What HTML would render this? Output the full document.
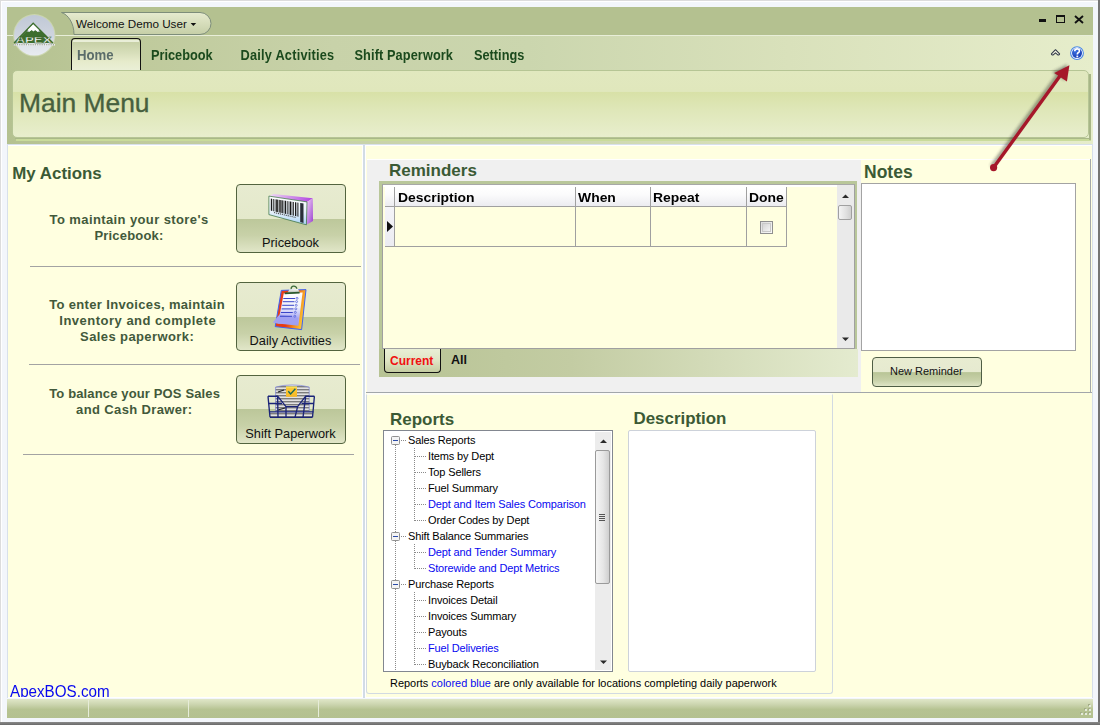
<!DOCTYPE html>
<html><head><meta charset="utf-8">
<style>
*{margin:0;padding:0;box-sizing:border-box;}
html,body{width:1100px;height:725px;overflow:hidden;background:#f3f6fb;font-family:"Liberation Sans",sans-serif;}
.a{position:absolute;}
.t{position:absolute;white-space:nowrap;line-height:1;}
.ttl{font-weight:bold;color:#3b5a35;}
.tab{font-weight:bold;font-size:12.75px;color:#1b4a1d;transform:scaleY(1.1);transform-origin:0 11.5px;}
.home{font-size:13.2px;}
.btn{position:absolute;left:236px;width:110px;height:69px;border:1px solid #53643f;border-radius:4px;background:linear-gradient(#e7ebd0 0,#e4e9cb 50%,#bcc79a 50%,#c8d1a8 75%,#e1e6c8 100%);overflow:hidden;}
.btn .lbl{position:absolute;left:-1px;right:0;text-align:center;font-size:12.8px;color:#111;line-height:1;}
.sep{position:absolute;height:1px;background:#a3a3a3;}
.act{position:absolute;font-weight:bold;font-size:13px;color:#42593b;line-height:16px;letter-spacing:0.35px;white-space:nowrap;}
.tree div{position:absolute;white-space:nowrap;font-size:11px;letter-spacing:-0.14px;line-height:16px;color:#000;}
.tree .b{color:#0808f0;}
</style></head><body>
<!-- window border -->
<div class="a" style="left:0;top:0;width:1100px;height:1px;background:#dcdcdc"></div>
<div class="a" style="left:0;top:0;width:1px;height:725px;background:#dcdcdc"></div>
<div class="a" style="left:1px;top:1px;width:1097px;height:1px;background:#fff"></div>
<div class="a" style="left:1px;top:1px;width:1px;height:721px;background:#fff"></div>
<div class="a" style="left:1098px;top:0;width:2px;height:725px;background:#747474"></div>
<div class="a" style="left:0;top:722px;width:1100px;height:3px;background:linear-gradient(#8a8a8a,#6a6a6a)"></div>

<!-- top green frame -->
<div class="a" style="left:7px;top:7px;width:1086px;height:28px;background:#b4c190"></div>
<div class="a" style="left:7px;top:35px;width:1086px;height:1px;background:#e8eed8"></div>
<div class="a" style="left:7px;top:36px;width:1086px;height:108px;background:linear-gradient(to right,#b4c190 0,#bfca9c 12%,#c8d2a9 30%,#cbd6ae 48%,#d9e1bb 72%,#e6edcb 100%)"></div>
<!-- logo -->
<svg class="a" style="left:12px;top:13px" width="45" height="45" viewBox="0 0 45 45">
 <defs>
  <linearGradient id="lg" x1="0" y1="0" x2="0" y2="1"><stop offset="0" stop-color="#c0c8d6"/><stop offset="0.5" stop-color="#ced4de"/><stop offset="0.72" stop-color="#dde2e9"/><stop offset="1" stop-color="#e8ebf0"/></linearGradient>
 </defs>
 <circle cx="22.3" cy="22.3" r="21.2" fill="#cbd6ae"/>
 <circle cx="22.3" cy="22.3" r="20.2" fill="url(#lg)"/>
 
 <path d="M6.5 26.2 L10.6 22.3 L14.6 18.2 L17.2 18.9 L19.9 16.5 L21.2 18.2 L23.2 16.9 L25.8 18.9 L29.1 18.2 L33.8 22.2 L37.7 26.2 L39 30 L4.5 30 Z" fill="#3d6e2e"/>
 <path d="M2.2 30.2 L21.2 10.5 L40.8 30.2" fill="none" stroke="#3d6e2e" stroke-width="1.7"/>
 <path d="M21.2 11.2 L15.8 16.8 L17.4 18.6 L19.9 16.9 L21.2 18.4 L23.2 17.1 L25.8 18.8 L27 16.9 Z" fill="#fff"/>
 <text x="21.5" y="30.3" text-anchor="middle" font-family="Liberation Sans" font-weight="bold" font-size="8.6" fill="#fff" stroke="#2f5a24" stroke-width="0.35" textLength="36" lengthAdjust="spacingAndGlyphs">APEX</text>
 <path d="M1.5 31.8 L43 31.8" stroke="#f4f4f4" stroke-width="1.6"/>
 <path d="M1.5 31.8 L43 31.8" stroke="#33402c" stroke-width="1.1" stroke-dasharray="0.9 0.9" opacity="0.6"/>
</svg>
<!-- welcome pill -->
<svg class="a" style="left:60px;top:11px" width="152" height="25" viewBox="0 0 152 25">
 <defs><linearGradient id="pg" x1="0" y1="0" x2="0" y2="1"><stop offset="0" stop-color="#e6ebcf"/><stop offset="1" stop-color="#c6cfa7"/></linearGradient></defs>
 <path d="M1.5 1.5 L140 1.5 A11 11 0 0 1 140 23.5 L14 23.5 C14 12 8 3.5 1.5 1.5 Z" fill="url(#pg)" stroke="#7d8d7a" stroke-width="1"/>
</svg>
<div class="t" style="left:76px;top:18px;font-size:11.7px;color:#111">Welcome Demo User</div>
<svg class="a" style="left:190px;top:22px" width="7" height="5"><path d="M0.6 1 L6.2 1 L3.4 4 Z" fill="#111"/></svg>

<!-- home tab -->
<div class="a" style="left:71px;top:38px;width:70px;height:33px;border:1px solid #111;border-width:1.6px 1.5px 0 1.5px;border-radius:4px 4px 0 0;background:linear-gradient(#c9d2aa 0,#c8d1a8 12%,#d8dfbb 45%,#e6ebcb 70%,#ebf0d8 100%)"></div>
<div class="a" style="left:73px;top:40px;width:66px;height:2px;background:#e9eed8"></div>
<div class="t tab home" style="left:77px;top:48.5px;color:#5b6d6a">Home</div>
<div class="t tab" style="left:151px;top:49.6px">Pricebook</div>
<div class="t tab" style="left:240.5px;top:49.6px;letter-spacing:0.23px">Daily Activities</div>
<div class="t tab" style="left:354.5px;top:49.6px;letter-spacing:0.1px">Shift Paperwork</div>
<div class="t tab" style="left:474px;top:49.6px">Settings</div>

<!-- window controls -->
<div class="a" style="left:1039px;top:19px;width:7px;height:3px;background:#111"></div>
<div class="a" style="left:1056px;top:15px;width:9px;height:8px;border:1px solid #111;border-top-width:2px"></div>
<svg class="a" style="left:1074px;top:15px" width="10" height="9"><path d="M1 1 L9 8 M9 1 L1 8" stroke="#111" stroke-width="1.9"/></svg>
<svg class="a" style="left:1050px;top:48px" width="12" height="9"><path d="M5.5 1.7 L9.6 5.9 Q9.4 7.2 7.8 6.9 L5.5 4.9 L3.2 6.9 Q1.6 7.2 1.4 5.9 Z" fill="#f8f8e4" stroke="#303848" stroke-width="1.05" stroke-linejoin="round"/></svg>
<svg class="a" style="left:1069px;top:45px" width="16" height="16" viewBox="0 0 16 16">
 <defs><radialGradient id="hg" cx="0.35" cy="0.3" r="0.8"><stop offset="0" stop-color="#3c72e0"/><stop offset="1" stop-color="#1236b0"/></radialGradient></defs>
 <circle cx="8" cy="8.1" r="6.4" fill="#fff" stroke="#4a88e4" stroke-width="1.1"/>
 <circle cx="8" cy="8.1" r="5" fill="url(#hg)"/>
 <path d="M5.7 6.3 Q5.8 3.9 8.1 3.9 Q10.4 3.9 10.4 5.9 Q10.4 7.1 9.1 7.8 Q8.3 8.3 8.3 9.6" fill="none" stroke="#fff" stroke-width="1.6"/>
 <rect x="7.4" y="10.6" width="1.8" height="1.7" fill="#fff"/>
</svg>

<!-- main menu panel -->
<div class="a" style="left:15px;top:138px;width:1076px;height:1px;background:#a9b888"></div>
<div class="a" style="left:16px;top:139px;width:1075px;height:2px;background:#c9db9b"></div>
<div class="a" style="left:1089px;top:74px;width:2px;height:66px;background:#a7b587"></div>
<div class="a" style="left:12px;top:70px;width:1077px;height:68px;border:1px solid #b6c595;border-radius:5px;background:linear-gradient(#e1e8bf 0,#e0e7bc 31%,#d8e1a7 32%,#dfe7b9 60%,#e8eecd 100%)"></div>
<div class="t" style="left:19px;top:89.8px;font-size:26.4px;color:#47603e;-webkit-text-stroke:0.35px #47603e">Main Menu</div>

<!-- content area -->
<div class="a" style="left:7px;top:144px;width:1086px;height:1px;background:#d8e0ea"></div>
<div class="a" style="left:7px;top:145px;width:1086px;height:553px;background:#fff"></div>
<div class="a" style="left:8px;top:146px;width:354px;height:551px;background:#ffffe0"></div>
<div class="a" style="left:7px;top:145px;width:1px;height:553px;background:#d8e0ea"></div>
<div class="a" style="left:363px;top:145px;width:2px;height:553px;background:#d2dce6"></div>
<div class="a" style="left:366px;top:146px;width:726px;height:551px;background:#ffffe0"></div>
<div class="a" style="left:1092px;top:145px;width:1px;height:553px;background:#d8e0ea"></div>

<!-- My Actions -->
<div class="t ttl" style="left:12.3px;top:165.6px;font-size:16.9px">My Actions</div>
<div class="act" style="left:49.6px;top:212px;letter-spacing:0.393px">To maintain your store's</div><div class="act" style="left:94.4px;top:228px;letter-spacing:0.2px">Pricebook:</div><div class="act" style="left:49.2px;top:297px;letter-spacing:0.343px">To enter Invoices, maintain</div><div class="act" style="left:59.3px;top:313px;letter-spacing:0.496px">Inventory and complete</div><div class="act" style="left:80.1px;top:329px;letter-spacing:0.398px">Sales paperwork:</div><div class="act" style="left:49.2px;top:386px;letter-spacing:0.14px">To balance your POS Sales</div><div class="act" style="left:76.1px;top:402px;letter-spacing:0.366px">and Cash Drawer:</div>
<div class="sep" style="left:30px;top:266px;width:331px"></div>

<div class="sep" style="left:29px;top:364px;width:331px"></div>

<div class="sep" style="left:23px;top:454px;width:331px"></div>

<div class="btn" style="top:184px"><div class="lbl" style="top:52px">Pricebook</div></div>
<div class="btn" style="top:282px"><div class="lbl" style="top:52px">Daily Activities</div></div>
<div class="btn" style="top:375px"><div class="lbl" style="top:52px">Shift Paperwork</div></div>

<svg class="a" style="left:265px;top:190px" width="52" height="40" viewBox="0 0 52 40">
<defs>
<linearGradient id="bf" x1="0" y1="0" x2="0" y2="1"><stop offset="0" stop-color="#ffffff"/><stop offset="0.55" stop-color="#e8f2fb"/><stop offset="1" stop-color="#a9d3f7"/></linearGradient>
<linearGradient id="br" x1="0" y1="0" x2="1" y2="1"><stop offset="0" stop-color="#f4d8f8"/><stop offset="1" stop-color="#9a3ed0"/></linearGradient>
<linearGradient id="bt" x1="0" y1="0" x2="1" y2="0"><stop offset="0" stop-color="#f0dcf6"/><stop offset="1" stop-color="#b044e0"/></linearGradient>
<clipPath id="bc"><path d="M5.2 8.5 L40.5 13.8 L40.5 33.5 L34.8 32 L34.8 27 L5.2 20.6 Z"/></clipPath>
</defs>
<path d="M3.9 6.1 L8.3 4.1 L47.8 8.3 L42 11.9 Z" fill="url(#bt)"/>
<path d="M42 11.9 L47.8 8.3 L48 31 L41.4 34.8 Z" fill="url(#br)"/>
<path d="M3.9 6.1 L42 11.9 L41.4 34.8 L3.9 24.6 Z" fill="url(#bf)" stroke="#2f6a3a" stroke-width="0.7"/>
<g clip-path="url(#bc)" fill="#1a1a1a">
<rect x="5.8" y="0" width="1.4" height="40"/><rect x="8.3" y="0" width="1" height="40"/>
<rect x="10.5" y="0" width="2.6" height="40" fill="#3a3a3a"/><rect x="13.6" y="0" width="3.2" height="40" fill="#555"/>
<rect x="17.2" y="0" width="1.2" height="40"/><rect x="19.6" y="0" width="1.6" height="40"/>
<rect x="22.4" y="0" width="1" height="40"/><rect x="24.6" y="0" width="1.8" height="40"/>
<rect x="27.6" y="0" width="1.2" height="40"/><rect x="30" y="0" width="1.3" height="40"/>
<rect x="32.4" y="0" width="1" height="40"/><rect x="35.2" y="0" width="3.3" height="40" fill="#2a2f38"/>
</g>
<path d="M9 22.5 L31 27.5" stroke="#333" stroke-width="1.1" stroke-dasharray="1.2 0.8" opacity="0.8"/>
</svg>
<svg class="a" style="left:270px;top:282px" width="42" height="52" viewBox="0 0 42 52">
<defs>
<linearGradient id="cb" x1="0" y1="0" x2="1" y2="0.3"><stop offset="0" stop-color="#e8401c"/><stop offset="0.55" stop-color="#e83a10"/><stop offset="0.8" stop-color="#f68a1c"/><stop offset="1" stop-color="#fbc030"/></linearGradient>
<linearGradient id="cp" x1="0" y1="0" x2="0" y2="1"><stop offset="0" stop-color="#ffffff"/><stop offset="0.45" stop-color="#eef0fb"/><stop offset="0.7" stop-color="#b8b8f6"/><stop offset="1" stop-color="#9a9af0"/></linearGradient>
<linearGradient id="cc" x1="0" y1="0" x2="0" y2="1"><stop offset="0" stop-color="#ffffff"/><stop offset="1" stop-color="#9aa89a"/></linearGradient>
</defs>
<path d="M11.3 8.4 L36 7.6 L31.6 47.6 L5.2 44.6 Z" fill="url(#cb)" stroke="#3f62f2" stroke-width="1" stroke-linejoin="round"/>
<path d="M13.8 11.2 L32.6 10.4 L28.4 43.8 L8 41.6 Z" fill="url(#cp)"/>
<path d="M2.8 40.4 L9.5 32.5 L28.6 35.5 L27.9 41.8 L8 41.8 Z" fill="#a0a0f2"/>
<path d="M17 11.5 L19.5 7.3 L28 7 L30 11 Z" fill="url(#cc)"/>
<path d="M14.6 11.3 L29.6 10.7" stroke="#2c5a2e" stroke-width="1.7"/>
<path d="M21.2 7.2 C20.5 3.5 26.5 2.8 26.8 6.8" fill="none" stroke="#3a6a3a" stroke-width="1.3"/>
<g stroke="#3a46c8" stroke-width="1">
<path d="M13.3 16.5 L25 16.5"/><path d="M12.8 19.7 L24.5 19.7"/><path d="M12.2 23.3 L24 23.3"/><path d="M11.6 26.9 L23.5 26.9"/><path d="M10.9 30.5 L22.8 30.5"/><path d="M10 34.3 L22 34.3"/>
</g>
<g fill="none" stroke="#4a5ad8" stroke-width="0.7">
<circle cx="27" cy="16.3" r="1"/><circle cx="26.6" cy="19.6" r="1"/><circle cx="26.2" cy="23.3" r="1"/><circle cx="25.8" cy="26.8" r="1"/><circle cx="25.3" cy="30.4" r="1"/><circle cx="24.8" cy="34.2" r="1"/>
</g>
</svg>
<svg class="a" style="left:264px;top:380px" width="54" height="42" viewBox="0 0 54 42">
<defs>
<pattern id="ps" width="4" height="3" patternUnits="userSpaceOnUse"><rect width="4" height="3" fill="#e2e2e2"/><rect y="0" width="4" height="1.4" fill="#7c7c7c"/></pattern>
<linearGradient id="sy" x1="0" y1="0" x2="0" y2="1"><stop offset="0" stop-color="#fff36a"/><stop offset="0.2" stop-color="#fcc836"/><stop offset="1" stop-color="#f6b824"/></linearGradient>
</defs>
<path d="M11.6 7 Q28 2.8 45.2 7 L45.2 32 L11.6 32 Z" fill="url(#ps)" stroke="#6a70d8" stroke-width="0.6"/>
<rect x="6" y="32" width="42.5" height="5.3" fill="url(#ps)"/>
<path d="M14 12 L20 10 M14 30 L21 28" stroke="#222" stroke-width="1.2"/>
<rect x="22" y="6.4" width="11" height="10.4" fill="url(#sy)"/>
<path d="M24.3 11.3 L26.6 13.9 L31.4 8.8" fill="none" stroke="#1a6a58" stroke-width="1.4"/>
<g fill="none" stroke="#1b2478" stroke-width="1.35">
<path d="M4 16.2 L13.6 16.2 L22 26.6 L33.6 26.6 L41.7 16.2 L50.4 16.2"/>
<path d="M4.5 23.5 L18 23.5 M37.5 23.5 L50 23.5"/>
<path d="M5 31.8 L49.5 31.8"/>
<path d="M6 37.3 L48.5 37.3"/>
<path d="M4 16.2 L6 37.3 M50.4 16.2 L48.5 37.3"/>
<path d="M13.6 16.2 L14 37.3 M22 26.6 L22 37.3 M33.6 26.6 L31 37.3 M41.7 16.2 L39 37.3"/>
</g>
</svg>
<div class="t" style="left:10px;top:683.5px;font-size:15.2px;color:#0808f0;height:12.5px;overflow:hidden;transform:scaleY(1.06);transform-origin:0 100%">ApexBOS.com</div>

<!-- Reminders panel -->
<div class="a" style="left:367px;top:159px;width:494px;height:1px;background:#fff"></div>
<div class="a" style="left:367px;top:160px;width:494px;height:232px;background:#f0f0f0"></div>
<div class="a" style="left:366px;top:392px;width:726px;height:1px;background:#a2a6aa"></div>
<div class="t ttl" style="left:389px;top:162px;font-size:17px">Reminders</div>
<div class="a" style="left:379px;top:181px;width:478px;height:196px;background:#b9c79a"></div>
<div class="a" style="left:382px;top:184px;width:473px;height:165px;background:#ffffe0;border:1px solid #a0a0a0;border-top-color:#a8a8a8"></div>
<div class="a" style="left:383px;top:185px;width:454px;height:2px;background:#fff"></div>
<!-- header row -->
<div class="a" style="left:385px;top:187px;width:402px;height:19px;background:linear-gradient(#ffffff,#fbfbfc 40%,#ececf0)"></div>
<div class="a" style="left:385px;top:206px;width:402px;height:1px;background:#a0a0a0"></div>
<div class="a" style="left:385px;top:207px;width:10px;height:39px;background:linear-gradient(#f4f4f8,#ececf2)"></div>
<div class="a" style="left:385px;top:246px;width:402px;height:1px;background:#a0a0a0"></div>
<div class="a" style="left:394px;top:187px;width:1px;height:60px;background:#a0a0a0"></div>
<div class="a" style="left:575px;top:187px;width:1px;height:60px;background:#a0a0a0"></div>
<div class="a" style="left:650px;top:187px;width:1px;height:60px;background:#a0a0a0"></div>
<div class="a" style="left:746px;top:187px;width:1px;height:60px;background:#a0a0a0"></div>
<div class="a" style="left:786px;top:187px;width:1px;height:60px;background:#a0a0a0"></div>
<div class="t" style="left:398px;top:191px;font-size:13px;font-weight:bold;color:#000;transform:scaleX(1.07);transform-origin:0 0">Description</div>
<div class="t" style="left:578px;top:191px;font-size:13px;font-weight:bold;color:#000;transform:scaleX(1.07);transform-origin:0 0">When</div>
<div class="t" style="left:653px;top:191px;font-size:13px;font-weight:bold;color:#000;transform:scaleX(1.07);transform-origin:0 0">Repeat</div>
<div class="t" style="left:749px;top:191px;font-size:13px;font-weight:bold;color:#000;transform:scaleX(1.07);transform-origin:0 0">Done</div>
<svg class="a" style="left:387px;top:221px" width="7" height="12"><path d="M0 0 L6 5.5 L0 11 Z" fill="#111"/></svg>
<div class="a" style="left:760px;top:221px;width:13px;height:13px;border:1px solid #8f8f8f;background:linear-gradient(135deg,#dcdcdc,#fafafa)"></div>
<div class="a" style="left:762px;top:223px;width:9px;height:9px;border:1px solid #c9c9c9;background:linear-gradient(135deg,#d5d5d5,#f4f4f4)"></div>
<!-- scrollbar -->
<div class="a" style="left:837px;top:185px;width:17px;height:163px;background:#eaeaea"></div>
<svg class="a" style="left:841px;top:194px" width="9" height="5"><path d="M1 4 L4.5 0.5 L8 4 Z" fill="#2a2a2a"/></svg>
<div class="a" style="left:838px;top:205px;width:14px;height:15px;border:1px solid #a0a0a0;border-radius:2px;background:linear-gradient(to right,#f4f4f4,#e0e0e0 60%,#cfcfcf)"></div>
<svg class="a" style="left:841px;top:337px" width="9" height="5"><path d="M1 0.5 L4.5 4 L8 0.5 Z" fill="#2a2a2a"/></svg>
<!-- tab strip -->
<div class="a" style="left:379px;top:349px;width:479px;height:28px;background:linear-gradient(to right,#b7c394,#c3cca3 40%,#e4ebcf)"></div>
<div class="a" style="left:384px;top:349px;width:57px;height:24px;border:1px solid #111;border-top:none;border-radius:0 0 4px 4px;background:linear-gradient(#e9efd6,#dfe5c5 50%,#c4cca1)"></div>
<div class="t" style="left:390px;top:355px;font-size:12px;font-weight:bold;color:#f01010">Current</div>
<div class="t" style="left:451px;top:354px;font-size:12.5px;font-weight:bold;color:#111">All</div>

<!-- Notes -->
<div class="t ttl" style="left:864px;top:163.6px;font-size:17.5px">Notes</div>
<div class="a" style="left:861px;top:183px;width:215px;height:168px;background:#fff;border:1px solid #a3a3a3"></div>
<div class="a" style="left:872px;top:357px;width:110px;height:30px;border:1px solid #4f5e45;border-radius:4px;background:linear-gradient(#e8ecd1 0,#e6ead0 50%,#b9c597 52%,#c8d1a9 80%,#dfe5c6 100%)"></div>
<div class="t" style="left:890px;top:366px;font-size:11px;color:#111">New Reminder</div>
<div class="a" style="left:861px;top:159px;width:229px;height:1px;background:#fff"></div><div class="a" style="left:1090px;top:159px;width:1px;height:234px;background:#a2a6aa"></div>

<!-- Reports panel -->
<div class="a" style="left:366px;top:393px;width:467px;height:301px;border:1px solid #d2dae2;border-top:2px solid #fdfdf6;border-radius:3px;background:#ffffe0"></div>
<div class="t ttl" style="left:390px;top:411px;font-size:17px">Reports</div>
<div class="t ttl" style="left:633.5px;top:410.7px;font-size:16.9px">Description</div>
<div class="a" style="left:383px;top:430px;width:230px;height:242px;background:#fff;border:1px solid #828790;overflow:hidden"></div>
<div class="a" style="left:628px;top:430px;width:188px;height:242px;background:#fff;border:1px solid #cdd2da;border-radius:2px"></div>
<div class="a tree" style="left:384px;top:431px;width:211px;height:240px;overflow:hidden"><svg class="a" style="left:0;top:0" width="211" height="240"><line x1="17" y1="9.5" x2="22" y2="9.5" stroke="#8a8a8a" stroke-dasharray="1 1"/><line x1="31" y1="25.5" x2="42" y2="25.5" stroke="#8a8a8a" stroke-dasharray="1 1"/><line x1="31" y1="41.5" x2="42" y2="41.5" stroke="#8a8a8a" stroke-dasharray="1 1"/><line x1="31" y1="57.5" x2="42" y2="57.5" stroke="#8a8a8a" stroke-dasharray="1 1"/><line x1="31" y1="73.5" x2="42" y2="73.5" stroke="#8a8a8a" stroke-dasharray="1 1"/><line x1="31" y1="89.5" x2="42" y2="89.5" stroke="#8a8a8a" stroke-dasharray="1 1"/><line x1="17" y1="105.5" x2="22" y2="105.5" stroke="#8a8a8a" stroke-dasharray="1 1"/><line x1="31" y1="121.5" x2="42" y2="121.5" stroke="#8a8a8a" stroke-dasharray="1 1"/><line x1="31" y1="137.5" x2="42" y2="137.5" stroke="#8a8a8a" stroke-dasharray="1 1"/><line x1="17" y1="153.5" x2="22" y2="153.5" stroke="#8a8a8a" stroke-dasharray="1 1"/><line x1="31" y1="169.5" x2="42" y2="169.5" stroke="#8a8a8a" stroke-dasharray="1 1"/><line x1="31" y1="185.5" x2="42" y2="185.5" stroke="#8a8a8a" stroke-dasharray="1 1"/><line x1="31" y1="201.5" x2="42" y2="201.5" stroke="#8a8a8a" stroke-dasharray="1 1"/><line x1="31" y1="217.5" x2="42" y2="217.5" stroke="#8a8a8a" stroke-dasharray="1 1"/><line x1="31" y1="233.5" x2="42" y2="233.5" stroke="#8a8a8a" stroke-dasharray="1 1"/><line x1="11.5" y1="14" x2="11.5" y2="240" stroke="#8a8a8a" stroke-dasharray="1 1"/><line x1="30.5" y1="17" x2="30.5" y2="90" stroke="#8a8a8a" stroke-dasharray="1 1"/><line x1="30.5" y1="113" x2="30.5" y2="138" stroke="#8a8a8a" stroke-dasharray="1 1"/><line x1="30.5" y1="161" x2="30.5" y2="234" stroke="#8a8a8a" stroke-dasharray="1 1"/><rect x="7.5" y="5.5" width="8" height="8" rx="1" fill="#f4f4f4" stroke="#919191"/><rect x="7.5" y="101.5" width="8" height="8" rx="1" fill="#f4f4f4" stroke="#919191"/><rect x="7.5" y="149.5" width="8" height="8" rx="1" fill="#f4f4f4" stroke="#919191"/><line x1="9" y1="9.5" x2="14" y2="9.5" stroke="#2b4ba8"/><line x1="9" y1="105.5" x2="14" y2="105.5" stroke="#2b4ba8"/><line x1="9" y1="153.5" x2="14" y2="153.5" stroke="#2b4ba8"/></svg><div style="left:24px;top:1px">Sales Reports</div><div class="" style="left:44px;top:17px">Items by Dept</div><div class="" style="left:44px;top:33px">Top Sellers</div><div class="" style="left:44px;top:49px">Fuel Summary</div><div class="b" style="left:44px;top:65px">Dept and Item Sales Comparison</div><div class="" style="left:44px;top:81px">Order Codes by Dept</div><div style="left:24px;top:97px">Shift Balance Summaries</div><div class="b" style="left:44px;top:113px">Dept and Tender Summary</div><div class="b" style="left:44px;top:129px">Storewide and Dept Metrics</div><div style="left:24px;top:145px">Purchase Reports</div><div class="" style="left:44px;top:161px">Invoices Detail</div><div class="" style="left:44px;top:177px">Invoices Summary</div><div class="" style="left:44px;top:193px">Payouts</div><div class="b" style="left:44px;top:209px">Fuel Deliveries</div><div class="" style="left:44px;top:225px">Buyback Reconciliation</div></div>
<div class="a" style="left:595px;top:432px;width:16px;height:238px;background:#ececec"></div>
<svg class="a" style="left:599px;top:439px" width="9" height="5"><path d="M1 4 L4.5 0.5 L8 4 Z" fill="#2a2a2a"/></svg>
<div class="a" style="left:595px;top:450px;width:15px;height:134px;border:1px solid #9a9a9a;border-radius:2px;background:linear-gradient(to right,#f5f5f5,#e6e6e6 55%,#cfcfcf)"></div>
<div class="a" style="left:599px;top:514px;width:6px;height:1px;background:#555;box-shadow:0 2px 0 #555,0 4px 0 #555,0 6px 0 #555"></div>
<svg class="a" style="left:599px;top:660px" width="9" height="5"><path d="M1 0.5 L4.5 4 L8 0.5 Z" fill="#2a2a2a"/></svg>
<div class="t" style="left:390px;top:678px;font-size:10.95px;color:#000">Reports <span style="color:#0808f0">colored blue</span> are only available for locations completing daily paperwork</div>

<!-- status bar -->
<div class="a" style="left:7px;top:699px;width:1086px;height:19px;background:linear-gradient(#e0e7c8,#cbd4ae 30%,#b6c392 55%,#b4c190)"></div>
<div class="a" style="left:88px;top:700px;width:1px;height:17px;background:#e6ecd8"></div>
<div class="a" style="left:188px;top:700px;width:1px;height:17px;background:#e6ecd8"></div>
<div class="a" style="left:318px;top:700px;width:1px;height:17px;background:#e6ecd8"></div>
<svg class="a" style="left:980px;top:55px" width="100" height="125" viewBox="0 0 100 125">
<defs><filter id="sh" x="-30%" y="-30%" width="160%" height="160%"><feGaussianBlur stdDeviation="1.6"/></filter></defs>
<g opacity="0.45" filter="url(#sh)" transform="translate(-2,-1)">
<path d="M13.6 112.6 L82 18" stroke="#222" stroke-width="3.5"/>
<path d="M89.4 10.3 L74.2 17.9 L86.9 26.5 Z" fill="#222"/>
</g>
<path d="M13.6 112.6 L81 19.5" stroke="#a6172a" stroke-width="3.4" stroke-linecap="round"/>
<path d="M89.4 10.3 L74.2 17.9 L86.9 26.5 Z" fill="#a6172a"/>
<circle cx="13.6" cy="112.6" r="3.6" fill="#a6172a"/>
</svg>
<div class="a" style="left:1081px;top:713px;width:2px;height:2px;background:#e4eadb;box-shadow:-1px -1px 0 #a3ae88"></div><div class="a" style="left:1085px;top:713px;width:2px;height:2px;background:#e4eadb;box-shadow:-1px -1px 0 #a3ae88"></div><div class="a" style="left:1089px;top:713px;width:2px;height:2px;background:#e4eadb;box-shadow:-1px -1px 0 #a3ae88"></div><div class="a" style="left:1085px;top:709px;width:2px;height:2px;background:#e4eadb;box-shadow:-1px -1px 0 #a3ae88"></div><div class="a" style="left:1089px;top:709px;width:2px;height:2px;background:#e4eadb;box-shadow:-1px -1px 0 #a3ae88"></div><div class="a" style="left:1089px;top:705px;width:2px;height:2px;background:#e4eadb;box-shadow:-1px -1px 0 #a3ae88"></div>
</body></html>
